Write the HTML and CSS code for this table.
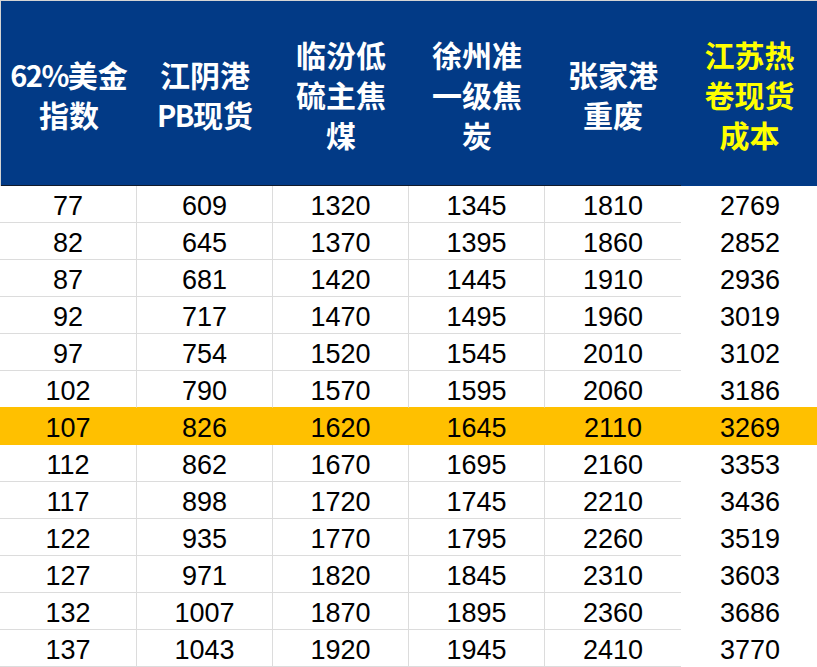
FILE: index.html
```html
<!DOCTYPE html>
<html lang="zh">
<head>
<meta charset="utf-8">
<title>成本测算表</title>
<link rel="stylesheet" href="styles.css">
</head>
<body>
<div class="sheet">
  <div class="head">
    <div class="hc"><span class="ln"><span class="lat">62%</span>美金</span><span class="ln">指数</span></div>
    <div class="hc"><span class="ln">江阴港</span><span class="ln"><span class="lat">PB</span>现货</span></div>
    <div class="hc"><span class="ln">临汾低</span><span class="ln">硫主焦</span><span class="ln">煤</span></div>
    <div class="hc"><span class="ln">徐州准</span><span class="ln">一级焦</span><span class="ln">炭</span></div>
    <div class="hc"><span class="ln">张家港</span><span class="ln">重废</span></div>
    <div class="hc hy"><span class="ln">江苏热</span><span class="ln">卷现货</span><span class="ln">成本</span></div>
  </div>
  <div class="body">
    <div class="row"><span>77</span><span>609</span><span>1320</span><span>1345</span><span>1810</span><span>2769</span></div>
    <div class="row"><span>82</span><span>645</span><span>1370</span><span>1395</span><span>1860</span><span>2852</span></div>
    <div class="row"><span>87</span><span>681</span><span>1420</span><span>1445</span><span>1910</span><span>2936</span></div>
    <div class="row"><span>92</span><span>717</span><span>1470</span><span>1495</span><span>1960</span><span>3019</span></div>
    <div class="row"><span>97</span><span>754</span><span>1520</span><span>1545</span><span>2010</span><span>3102</span></div>
    <div class="row pre"><span>102</span><span>790</span><span>1570</span><span>1595</span><span>2060</span><span>3186</span></div>
    <div class="row hl"><span>107</span><span>826</span><span>1620</span><span>1645</span><span>2110</span><span>3269</span></div>
    <div class="row"><span>112</span><span>862</span><span>1670</span><span>1695</span><span>2160</span><span>3353</span></div>
    <div class="row"><span>117</span><span>898</span><span>1720</span><span>1745</span><span>2210</span><span>3436</span></div>
    <div class="row"><span>122</span><span>935</span><span>1770</span><span>1795</span><span>2260</span><span>3519</span></div>
    <div class="row"><span>127</span><span>971</span><span>1820</span><span>1845</span><span>2310</span><span>3603</span></div>
    <div class="row"><span>132</span><span>1007</span><span>1870</span><span>1895</span><span>2360</span><span>3686</span></div>
    <div class="row"><span>137</span><span>1043</span><span>1920</span><span>1945</span><span>2410</span><span>3770</span></div>
  </div>
</div>
</body>
</html>
```

FILE: styles.css
```css
html, body {
  margin: 0;
  padding: 0;
  background: #ffffff;
}

.sheet {
  width: 817px;
  height: 667px;
  overflow: hidden;
  border-top: 1px solid #d4d4d4;
  box-sizing: border-box;
}

.head {
  display: grid;
  grid-template-columns: 136px 136px 136px 136px 136px 137px;
  height: 185px;
  background: #023a86;
  border-left: 1px solid #d4d4d4;
  box-sizing: border-box;
}

.hc {
  display: flex;
  flex-direction: column;
  align-items: center;
  justify-content: center;
  padding-top: 2px;
  box-sizing: border-box;
  border-bottom: 1px solid #111a2a;
  color: #ffffff;
  font-family: "Noto Sans CJK SC", "Liberation Sans", sans-serif;
  font-weight: 700;
  font-size: 30px;
}

.ln {
  display: block;
  height: 40px;
  line-height: 40px;
  white-space: nowrap;
}

.lat {
  letter-spacing: -1.5px;
  font-size: 29px;
}

.hc.hy {
  color: #ffff00;
  border-bottom-color: #023a86;
}

.row {
  display: grid;
  grid-template-columns: 137px 136px 136px 136px 136px 136px;
  height: 37px;
}

.row span {
  display: block;
  box-sizing: border-box;
  height: 37px;
  padding-top: 4px;
  line-height: 32px;
  text-align: center;
  font-family: "Liberation Sans", Arial, sans-serif;
  font-size: 27px;
  color: #000000;
  border-right: 1px solid #dcdcdc;
  border-bottom: 1px solid #dcdcdc;
}

.row span:nth-child(5) {
  border-right: none;
}

.row span:last-child {
  border-right: none;
  border-bottom-color: #ffffff;
  padding-left: 2px;
}

.row.pre span {
  border-bottom-color: #ffc000;
}

.row.hl span {
  background: #ffc000;
  border-color: #ffc000;
}
```
